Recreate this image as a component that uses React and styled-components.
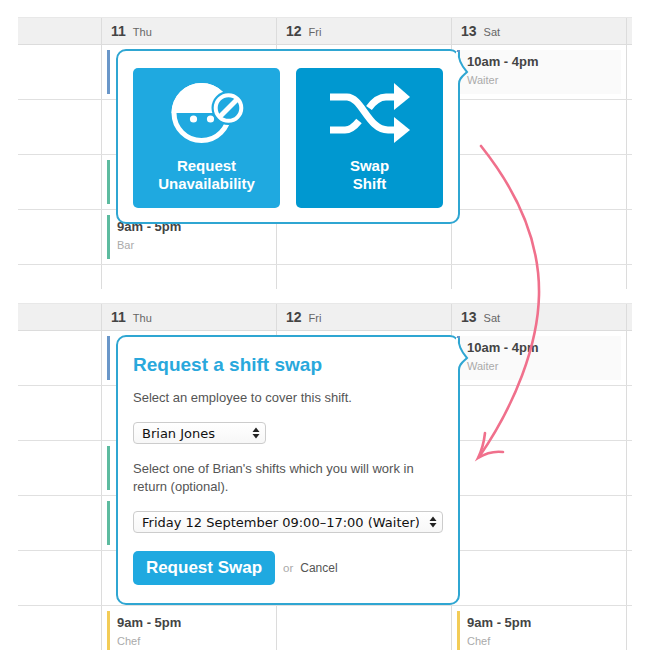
import React from "react";
import styled, { createGlobalStyle } from "styled-components";

const GlobalStyle = createGlobalStyle`
  html, body {
    margin: 0;
    background: #fff;
  }
  body {
    font-family: "Liberation Sans", Arial, sans-serif;
    color: #555;
  }
  * {
    box-sizing: border-box;
  }
`;

const Page = styled.div`
  position: relative;
  width: 650px;
  height: 664px;
  padding: 17px 18px 0;
  overflow: hidden;
`;

const Calendar = styled.section`
  position: relative;
  width: 614px;
  height: ${({ $height }) => $height}px;
  margin-bottom: ${({ $gap }) => $gap || 0}px;
`;

const Clip = styled.div`
  height: 100%;
  overflow: hidden;
`;

const columns = "83px 175px 175px 175px 6px";

const HeaderRow = styled.div`
  display: grid;
  grid-template-columns: ${columns};
  height: 28px;
  background: #f0f0f0;
  border-top: 1px solid #e8e8e8;
  border-bottom: 1px solid #dcdcdc;
`;

const HeaderCell = styled.div`
  border-left: ${({ $first }) => ($first ? "none" : "1px solid #dcdcdc")};
  padding-left: 9px;
  line-height: 26px;
  white-space: nowrap;

  b {
    font-size: 14px;
    color: #444;
    margin-right: 7px;
  }
  span {
    font-size: 11px;
    color: #666;
  }
`;

const Row = styled.div`
  display: grid;
  grid-template-columns: ${columns};
  height: ${({ $height }) => $height || 55}px;
  border-bottom: ${({ $open }) => ($open ? "none" : "1px solid #e0e0e0")};
`;

const Cell = styled.div`
  border-left: ${({ $first }) => ($first ? "none" : "1px solid #dcdcdc")};
  padding: 5px 5px 0 5px;
  min-width: 0;
`;

const Shift = styled.div`
  height: 44px;
  padding: 5px 0 0 7px;
  border-left: 3px solid ${({ $color }) => $color};
  background: ${({ $card }) => ($card ? "#fafafa" : "transparent")};
`;

const ShiftTime = styled.div`
  font-size: 13px;
  font-weight: bold;
  line-height: 14px;
  color: #444;
`;

const ShiftRole = styled.div`
  font-size: 11px;
  line-height: 13px;
  margin-top: 5px;
  color: #aaa;
`;

const Popover = styled.div`
  position: absolute;
  left: 98px;
  top: 32px;
  z-index: 2;
  width: 344px;
  height: ${({ $height }) => $height}px;
  padding: 17px 15px 0;
  background: #fff;
  border: 2px solid #2fa6d2;
  border-radius: 10px;
`;

const TailSvg = styled.svg`
  position: absolute;
  top: -1px;
  right: -12px;
  width: 15px;
  height: 35px;
`;

const Tiles = styled.div`
  display: grid;
  grid-template-columns: 147px 147px;
  gap: 16px;
`;

const Tile = styled.div`
  height: 140px;
  padding-top: 13px;
  background: ${({ $dark }) => ($dark ? "#0098d0" : "#1fa9e0")};
  border-radius: 5px;
  display: flex;
  flex-direction: column;
  align-items: center;
  color: #fff;
`;

const TileLabel = styled.div`
  margin-top: 12px;
  font-size: 15px;
  font-weight: bold;
  line-height: 18px;
  text-align: center;
`;

const Title = styled.h2`
  margin: 0;
  padding-top: -2px;
  font-size: 19px;
  line-height: 22px;
  font-weight: bold;
  color: #29a8dc;
`;

const Text = styled.p`
  margin: ${({ $top }) => $top}px 0 0;
  font-size: 13px;
  line-height: 18px;
  color: #555;
`;

const SelectWrap = styled.div`
  position: relative;
  width: ${({ $width }) => $width}px;
  height: 22px;
  margin-top: ${({ $top }) => $top}px;
`;

const Select = styled.select`
  appearance: none;
  display: block;
  width: 100%;
  height: 100%;
  padding: 0 23px 0 8px;
  font-family: "DejaVu Sans", Verdana, sans-serif;
  font-size: 13px;
  color: #111;
  background: linear-gradient(#fff, #f7f7f7);
  border: 1px solid #ccc;
  border-radius: 4px;
`;

const Caret = styled.svg`
  position: absolute;
  top: 5px;
  right: 6px;
  width: 8px;
  height: 12px;
  pointer-events: none;
`;

const Actions = styled.div`
  display: flex;
  align-items: center;
  margin-top: 18px;
`;

const Button = styled.button`
  width: 142px;
  height: 34px;
  padding: 0;
  border: 0;
  border-radius: 5px;
  background: #1fa9e0;
  color: #fff;
  font-family: inherit;
  font-size: 17px;
  font-weight: bold;
`;

const Or = styled.span`
  margin-left: 8px;
  font-size: 11.5px;
  color: #aaa;
`;

const Cancel = styled.span`
  margin-left: 7px;
  font-size: 12px;
  color: #555;
`;

const ArrowSvg = styled.svg`
  position: absolute;
  inset: 0;
  z-index: 3;
  width: 650px;
  height: 664px;
  pointer-events: none;
`;

const blue = "#6a97c9";
const green = "#5dbb9f";
const yellow = "#f3cc57";

const Tail = () => (
  <TailSvg viewBox="455 50 15 35">
    <path d="M456 52 L459 52 C458 58 460 64 467 72 C463 76 459 78 459 84 L456 84 Z" fill="#fff" />
    <path d="M459 52 C458 58 460 64 467 72 C463 76 459 78 459 84" fill="none" stroke="#2fa6d2" strokeWidth="2" />
  </TailSvg>
);

const FaceIcon = () => (
  <svg width="90" height="64" viewBox="161.5 81 90 64">
    <circle cx="201" cy="113" r="27.5" fill="none" stroke="#fff" strokeWidth="5" />
    <path d="M171 113 A30 30 0 0 1 231 113 Z" fill="#fff" />
    <circle cx="193" cy="119" r="3.6" fill="#fff" />
    <circle cx="210" cy="119" r="3.6" fill="#fff" />
    <circle cx="228" cy="108" r="17" fill="#1fa9e0" />
    <circle cx="228" cy="108" r="12.8" fill="none" stroke="#fff" strokeWidth="4" />
    <path d="M219.5 116.5 L236.5 99.5" stroke="#fff" strokeWidth="5" />
  </svg>
);

const ShuffleIcon = () => (
  <svg width="90" height="64" viewBox="325 81 90 64">
    <path d="M330 97 H347 C362 97 368 130 388 130 H396" fill="none" stroke="#fff" strokeWidth="7" />
    <path d="M330 130 H345 C351 130 355 126 359 121" fill="none" stroke="#fff" strokeWidth="7" />
    <path d="M369 108 C374 101 379 97 386 97 H396" fill="none" stroke="#fff" strokeWidth="7" />
    <path d="M394 83 L410 97 L394 110 Z" fill="#fff" />
    <path d="M394 117 L410 130 L394 143 Z" fill="#fff" />
  </svg>
);

const SelectCaret = () => (
  <Caret viewBox="0 0 8 12">
    <path d="M4 0.5 L7.5 5 H0.5 Z M4 11.5 L0.5 7 H7.5 Z" fill="#222" />
  </Caret>
);

const days = [
  { num: 11, name: "Thu" },
  { num: 12, name: "Fri" },
  { num: 13, name: "Sat" },
];

const waiter = { time: "10am - 4pm", role: "Waiter", color: blue, card: true };
const chef = { time: "9am - 5pm", role: "Chef", color: yellow };

const topRows = [
  { thu: { color: blue }, sat: waiter },
  {},
  { thu: { color: green } },
  { thu: { time: "9am - 5pm", role: "Bar", color: green } },
  { height: 24, open: true },
];

const bottomRows = [
  { thu: { color: blue }, sat: waiter },
  {},
  { thu: { color: green } },
  { thu: { color: green } },
  {},
  { thu: chef, sat: chef, height: 43, open: true },
];

const ShiftBlock = ({ shift }) =>
  shift ? (
    <Shift $color={shift.color} $card={shift.card}>
      <ShiftTime>{shift.time}</ShiftTime>
      <ShiftRole>{shift.role}</ShiftRole>
    </Shift>
  ) : null;

const Grid = ({ rows }) => (
  <Clip>
    <HeaderRow>
      <HeaderCell $first />
      {days.map((d) => (
        <HeaderCell key={d.num}>
          <b>{d.num}</b>
          <span>{d.name}</span>
        </HeaderCell>
      ))}
      <HeaderCell />
    </HeaderRow>
    {rows.map((r, i) => (
      <Row key={i} $height={r.height} $open={r.open}>
        <Cell $first />
        <Cell>
          <ShiftBlock shift={r.thu} />
        </Cell>
        <Cell />
        <Cell>
          <ShiftBlock shift={r.sat} />
        </Cell>
        <Cell />
      </Row>
    ))}
  </Clip>
);

export default function App() {
  return (
    <Page>
      <GlobalStyle />
      <Calendar $height={272} $gap={14}>
        <Grid rows={topRows} />
        <Popover $height={175}>
          <Tail />
          <Tiles>
            <Tile>
              <FaceIcon />
              <TileLabel>
                Request
                <br />
                Unavailability
              </TileLabel>
            </Tile>
            <Tile $dark>
              <ShuffleIcon />
              <TileLabel>
                Swap
                <br />
                Shift
              </TileLabel>
            </Tile>
          </Tiles>
        </Popover>
      </Calendar>
      <Calendar $height={347}>
        <Grid rows={bottomRows} />
        <Popover $height={270}>
          <Tail />
          <Title>Request a shift swap</Title>
          <Text $top={13}>Select an employee to cover this shift.</Text>
          <SelectWrap $width={133} $top={15}>
            <Select defaultValue="brian">
              <option value="brian">Brian Jones</option>
            </Select>
            <SelectCaret />
          </SelectWrap>
          <Text $top={16}>
            Select one of Brian's shifts which you will work in
            <br />
            return (optional).
          </Text>
          <SelectWrap $width={310} $top={15}>
            <Select defaultValue="fri">
              <option value="fri">Friday 12 September 09:00–17:00 (Waiter)</option>
            </Select>
            <SelectCaret />
          </SelectWrap>
          <Actions>
            <Button>Request Swap</Button>
            <Or>or</Or>
            <Cancel>Cancel</Cancel>
          </Actions>
        </Popover>
      </Calendar>
      <ArrowSvg viewBox="0 0 650 664">
        <path
          d="M481 146 C520 195 540 245 539 295 C538 345 515 405 479 457"
          fill="none"
          stroke="#f0708c"
          strokeWidth="2.6"
          strokeLinecap="round"
        />
        <path
          d="M485 433 C484 442 482 450 478 458 C486 453 495 451 503 452"
          fill="none"
          stroke="#f0708c"
          strokeWidth="2.6"
          strokeLinecap="round"
        />
      </ArrowSvg>
    </Page>
  );
}
